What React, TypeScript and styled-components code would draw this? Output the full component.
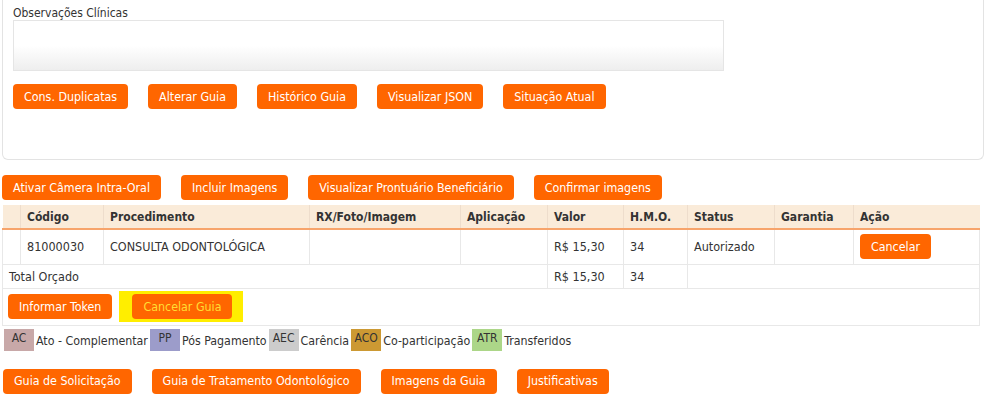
import styled, { createGlobalStyle } from 'styled-components'

const GlobalStyle = createGlobalStyle`
  body {
    margin: 0;
    background: #ffffff;
    font-family: 'DejaVu Sans Condensed', 'DejaVu Sans', sans-serif;
    font-size: 12px;
    color: #333333;
  }
`
const Page = styled.div`
  width: 985px;
  height: 403px;
  overflow: hidden;
`
const Panel = styled.div`
  margin-left: 2px;
  width: 982px;
  height: 160px;
  box-sizing: border-box;
  border: 1px solid #e3e3e3;
  border-top: none;
  border-radius: 0 0 6px 6px;
  padding: 7px 10px 0;
`
const Label = styled.div`
  font-size: 12px;
  line-height: 13px;
  color: #333;
`
const TextArea = styled.div`
  width: 711px;
  height: 51px;
  box-sizing: border-box;
  border: 1px solid #e5e5e5;
  background: linear-gradient(to bottom, #ffffff 50%, #eeeeee 100%);
`
const ButtonRow = styled.div<{ $top: number; $left?: number }>`
  display: flex;
  gap: 20px;
  margin-top: ${({ $top }) => $top}px;
  margin-left: ${({ $left }) => $left ?? 0}px;
`
const Button = styled.button<{ $warn?: boolean }>`
  height: 25px;
  padding: 0 11px;
  border: none;
  border-radius: 4px;
  background: #ff6600;
  color: ${({ $warn }) => ($warn ? '#ffdd33' : '#ffffff')};
  font-family: 'DejaVu Sans Condensed', 'DejaVu Sans', sans-serif;
  font-size: 12.35px;
  white-space: nowrap;
  cursor: pointer;
`
const Highlight = styled.span`
  display: inline-flex;
  align-items: center;
  background: #ffee00;
  padding: 3px 11px 3px 13px;
`
const Table = styled.table`
  margin: 5px 0 0 2px;
  width: 977px;
  border-collapse: collapse;
  table-layout: fixed;
`
const Th = styled.th<{ $w: number }>`
  width: ${({ $w }) => $w}px;
  height: 24px;
  box-sizing: border-box;
  padding: 0 6px;
  background: #faebd9;
  border-left: 1px solid #eeddcc;
  border-bottom: 2px solid #f7a46b;
  text-align: left;
  font-size: 12px;
  font-weight: bold;
  color: #333;
  &:first-child {
    border-left: none;
  }
`
const Td = styled.td<{ $h?: number }>`
  height: ${({ $h }) => $h ?? 35}px;
  box-sizing: border-box;
  padding: 0 6px;
  border: 1px solid #e8e8e8;
  font-size: 12.5px;
  color: #333;
`
const ActionCell = styled.td`
  height: 36px;
  padding: 0 5px;
  border: 1px solid #e8e8e8;
`
const Actions = styled.div`
  display: flex;
  align-items: center;
  gap: 7px;
`
const Legend = styled.div`
  display: flex;
  gap: 2px;
  margin: 3px 0 0 4px;
  height: 22px;
`
const LegendItem = styled.div`
  display: flex;
  gap: 2px;
`
const Swatch = styled.span<{ $bg: string }>`
  width: 30px;
  height: 22px;
  padding-top: 2px;
  box-sizing: border-box;
  background: ${({ $bg }) => $bg};
  text-align: center;
  font-size: 12px;
  line-height: 14px;
  color: #333;
`
const LegendText = styled.span`
  padding-top: 5px;
  font-size: 12.3px;
  line-height: 15px;
  color: #333;
`

const columns: [string, number][] = [
  ['', 18],
  ['Código', 83],
  ['Procedimento', 206],
  ['RX/Foto/Imagem', 151],
  ['Aplicação', 87],
  ['Valor', 76],
  ['H.M.O.', 64],
  ['Status', 87],
  ['Garantia', 79],
  ['Ação', 126],
]

const legend = [
  { code: 'AC', text: 'Ato - Complementar', bg: '#c8a8a8' },
  { code: 'PP', text: 'Pós Pagamento', bg: '#9c9cca' },
  { code: 'AEC', text: 'Carência', bg: '#cccccc' },
  { code: 'ACO', text: 'Co-participação', bg: '#cc9933' },
  { code: 'ATR', text: 'Transferidos', bg: '#acd688' },
]

const App = () => {
  return (
    <Page>
      <GlobalStyle />
      <Panel>
        <Label>Observações Clínicas</Label>
        <TextArea />
        <ButtonRow $top={13}>
          <Button>Cons. Duplicatas</Button>
          <Button>Alterar Guia</Button>
          <Button>Histórico Guia</Button>
          <Button>Visualizar JSON</Button>
          <Button>Situação Atual</Button>
        </ButtonRow>
      </Panel>
      <ButtonRow $top={15} $left={2}>
        <Button>Ativar Câmera Intra-Oral</Button>
        <Button>Incluir Imagens</Button>
        <Button>Visualizar Prontuário Beneficiário</Button>
        <Button>Confirmar imagens</Button>
      </ButtonRow>
      <Table>
        <thead>
          <tr>
            {columns.map(([name, w]) => (
              <Th key={name || 'blank'} $w={w}>
                {name}
              </Th>
            ))}
          </tr>
        </thead>
        <tbody>
          <tr>
            <Td />
            <Td>81000030</Td>
            <Td>CONSULTA ODONTOLÓGICA</Td>
            <Td />
            <Td />
            <Td>R$ 15,30</Td>
            <Td>34</Td>
            <Td>Autorizado</Td>
            <Td />
            <Td>
              <Button>Cancelar</Button>
            </Td>
          </tr>
          <tr>
            <Td $h={24} colSpan={5}>
              Total Orçado
            </Td>
            <Td $h={24}>R$ 15,30</Td>
            <Td $h={24}>34</Td>
            <Td $h={24} colSpan={3} />
          </tr>
          <tr>
            <ActionCell colSpan={10}>
              <Actions>
                <Button>Informar Token</Button>
                <Highlight>
                  <Button $warn>Cancelar Guia</Button>
                </Highlight>
              </Actions>
            </ActionCell>
          </tr>
        </tbody>
      </Table>
      <Legend>
        {legend.map((item) => (
          <LegendItem key={item.code}>
            <Swatch $bg={item.bg}>{item.code}</Swatch>
            <LegendText>{item.text}</LegendText>
          </LegendItem>
        ))}
      </Legend>
      <ButtonRow $top={18} $left={3}>
        <Button>Guia de Solicitação</Button>
        <Button>Guia de Tratamento Odontológico</Button>
        <Button>Imagens da Guia</Button>
        <Button>Justificativas</Button>
      </ButtonRow>
    </Page>
  )
}

export default App
